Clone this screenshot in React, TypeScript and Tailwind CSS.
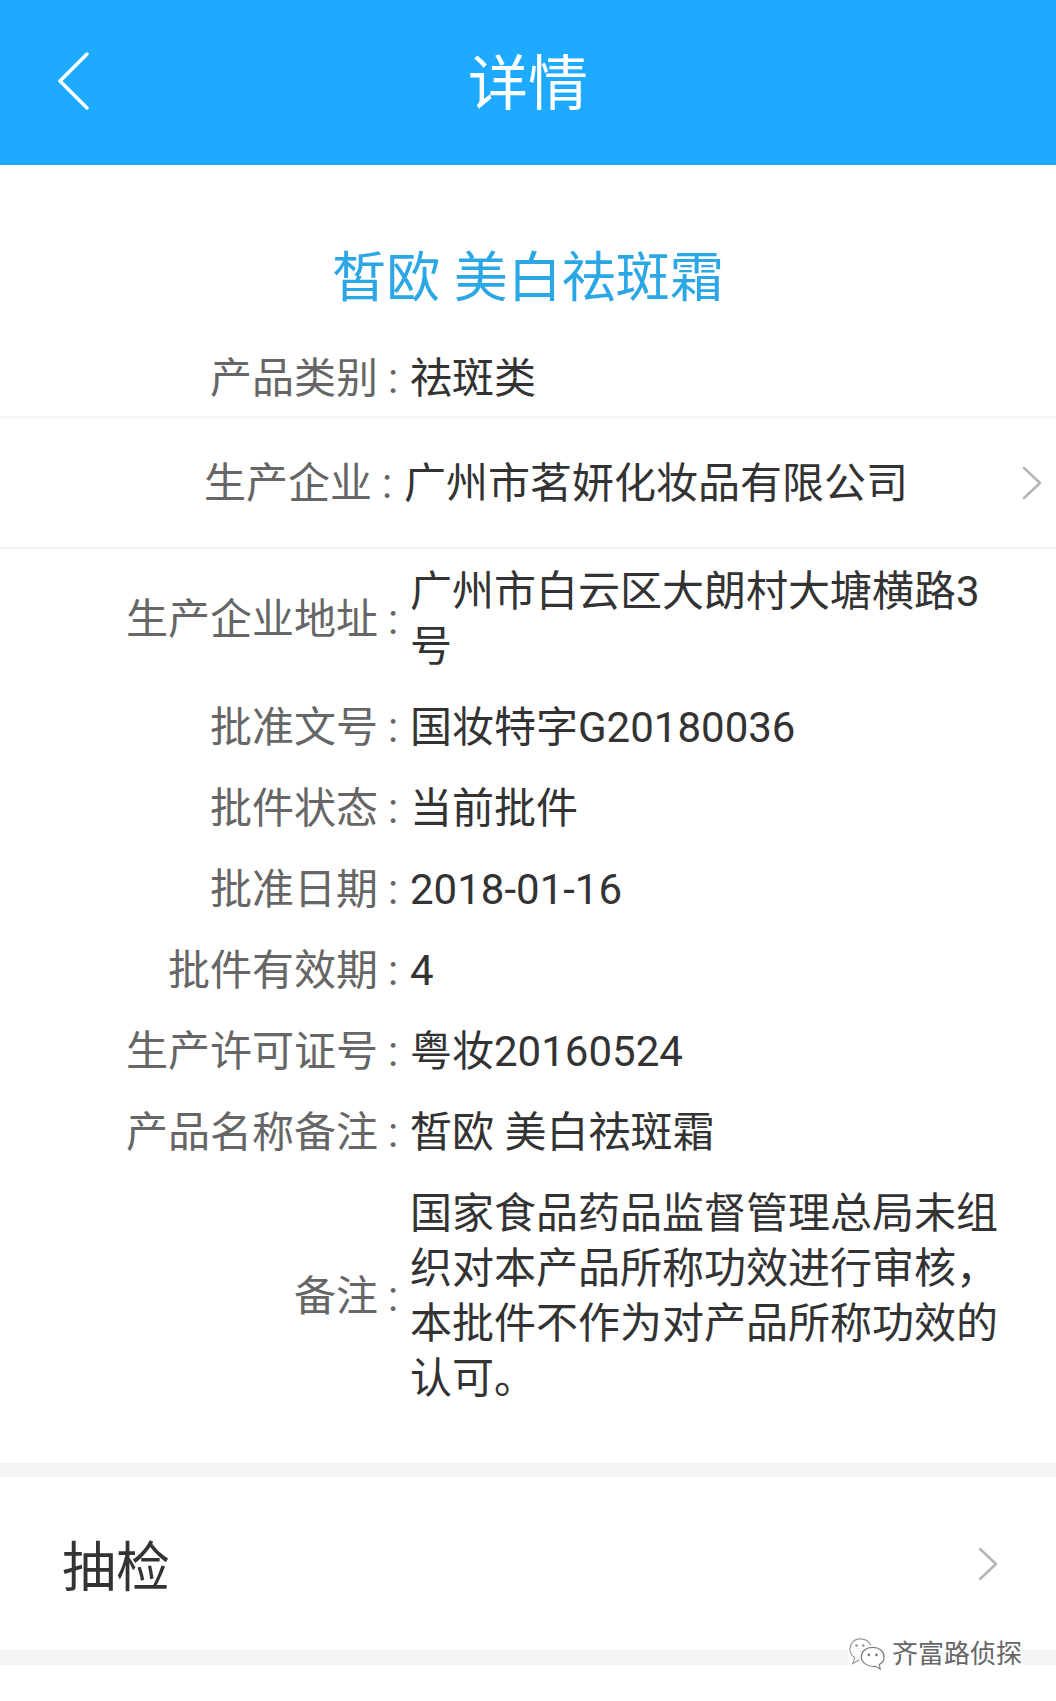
const font = { fontFamily: '"Roboto", "Noto Sans CJK SC", sans-serif' };

function Chevron({ className }: { className: string }) {
  return (
    <svg viewBox="0 0 20 34" fill="none" className={className}>
      <path d="M2 2 L18 17 L2 32" stroke="#b4b4b4" strokeWidth="2.5" strokeLinecap="round" strokeLinejoin="round" />
    </svg>
  );
}

function Row({ label, children }: { label: string; children: React.ReactNode }) {
  return (
    <div className="flex items-center py-[13px]">
      <div className="w-[378px] shrink-0 text-right text-[#666666]">{label}</div>
      <div className="w-[32px] shrink-0 pl-[10px] text-[#666666]">:</div>
      <div className="w-[600px] text-[#333333]">{children}</div>
    </div>
  );
}

export default function App() {
  return (
    <div className="w-[1056px] h-[1701px] overflow-hidden bg-white text-[42px] leading-[55px]" style={font}>
      {/* Header */}
      <div className="relative flex h-[165px] items-center justify-center bg-[#1eaaff] pt-[4px] text-white">
        <svg viewBox="0 0 34 60" fill="none" className="absolute left-[56px] top-[51px] h-[60px] w-[34px]">
          <path d="M31 3 L4 30 L31 57" stroke="#ffffff" strokeWidth="3.5" strokeLinecap="round" strokeLinejoin="round" />
        </svg>
        <span className="text-[60px] leading-none">详情</span>
      </div>

      {/* Title */}
      <div className="pt-[85px] pb-[28px] text-center text-[54px] leading-[58px] text-[#2ba7e6]">皙欧 美白祛斑霜</div>

      <div className="flex h-[83px] items-center border-b-[3px] border-[#f6f6f6] pt-[4px]">
        <div className="w-[378px] shrink-0 text-right text-[#666666]">产品类别</div>
        <div className="w-[32px] shrink-0 pl-[10px] text-[#666666]">:</div>
        <div className="text-[#333333]">祛斑类</div>
      </div>

      {/* Company */}
      <div className="flex h-[130px] items-center border-b-[2px] border-[#f4f4f4]">
        <div className="w-[372px] shrink-0 text-right text-[#666666]">生产企业</div>
        <div className="w-[32px] shrink-0 pl-[10px] text-[#666666]">:</div>
        <div className="flex-1 text-[#333333]">广州市茗妍化妆品有限公司</div>
        <Chevron className="mr-[14px] h-[34px] w-[20px]" />
      </div>

      {/* Details */}
      <div className="pt-[2px]">
        <Row label="生产企业地址">
          <div className="w-[570px]">广州市白云区大朗村大塘横路3号</div>
        </Row>
        <Row label="批准文号">国妆特字G20180036</Row>
        <Row label="批件状态">当前批件</Row>
        <Row label="批准日期">2018-01-16</Row>
        <Row label="批件有效期">4</Row>
        <Row label="生产许可证号">粤妆20160524</Row>
        <Row label="产品名称备注">皙欧 美白祛斑霜</Row>
        <Row label="备注">
          <div className="w-[592px]">国家食品药品监督管理总局未组织对本产品所称功效进行审核，本批件不作为对产品所称功效的认可。</div>
        </Row>
      </div>

      {/* Inspection */}
      <div className="mt-[44px] h-[14px] bg-[#f5f5f5]" />
      <div className="flex h-[173px] items-center justify-between pl-[62px] pr-[58px] text-[54px] text-[#333333]">
        <span className="pt-[10px]">抽检</span>
        <Chevron className="h-[34px] w-[20px]" />
      </div>
      <div className="relative h-[15px] bg-[#f5f5f5]">
        <div className="absolute -top-[13px] right-[34px] flex items-center gap-[6px] bg-white/70">
          <svg viewBox="0 0 40 36" fill="none" className="h-[34px] w-[38px]">
            <path d="M24 9 C22 4 17 2 13 2 C6 2 2 7 2 13 C2 17 4 20 7 22 L5 28 L12 24" stroke="#9a9a9a" strokeWidth="1.2" />
            <path d="M26 11 C33 11 38 15 38 21 C38 25 36 28 33 29 L34 34 L29 31 C22 32 14 28 14 21 C14 15 19 11 26 11 Z" stroke="#777777" strokeWidth="1.2" fill="#ffffff" />
            <circle cx="22" cy="19" r="1.4" fill="#777777" />
            <circle cx="30" cy="19" r="1.4" fill="#777777" />
            <circle cx="9" cy="9" r="1.4" fill="#999999" />
            <circle cx="16" cy="9" r="1.4" fill="#999999" />
          </svg>
          <span className="text-[26px] leading-[28px] text-[#666666]">齐富路侦探</span>
        </div>
      </div>
    </div>
  );
}
